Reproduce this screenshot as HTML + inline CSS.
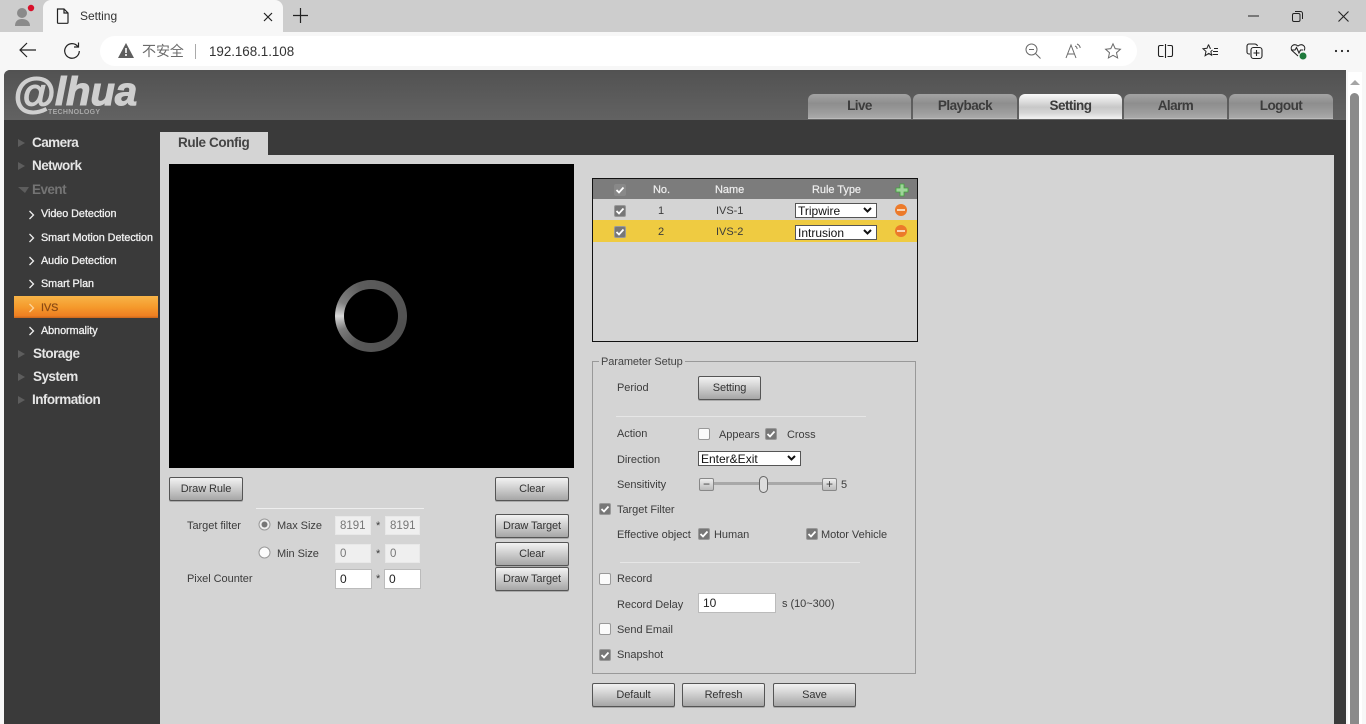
<!DOCTYPE html>
<html lang="en"><head><meta charset="utf-8"><title>Setting</title>
<style>
html,body{margin:0;padding:0;width:1366px;height:724px;overflow:hidden;background:#f7f7f7}
body{font-family:"Liberation Sans","Noto Sans CJK SC",sans-serif;font-size:11px;color:#3c3c3c;position:relative}
.a,.t,.b,.c,.i,.s{position:absolute;box-sizing:border-box}
.t{white-space:nowrap;line-height:16px;letter-spacing:-.04px}
.b{border:1px solid #555;border-radius:2px;background:linear-gradient(#f2f2f2,#d8d8d8 35%,#a6a6a6);text-align:center;color:#333;height:24px;line-height:23px;font-size:11px;box-shadow:0 1px 0 #aaa;letter-spacing:-.1px}
.c{width:12px;height:12px;background:#777;border:1px solid #999;border-radius:2px}
.c svg{position:absolute;left:0;top:0}
.c.o{background:#fbfbfb;border:1px solid #999;border-radius:2px}
.i{background:#fff;border:1px solid #bbb;font-size:12px;line-height:18px;padding-left:4px;color:#222}
.i.d{background:#efefef;border-color:#e8e8e8;color:#777;font-size:11.5px;padding-left:4px}
.s{background:#fff;border:1px solid #555;font-size:12px;color:#111;line-height:14px;padding-left:2px;height:15px;width:82px}
.s svg{position:absolute;right:4px;top:3px}
.m{color:#e6e6e6;font-weight:bold;font-size:13.5px;letter-spacing:-.55px;line-height:16px}
.n{color:#f0f0f0;font-size:10.8px;-webkit-text-stroke:.3px #f0f0f0}
.tab{position:absolute;top:94px;height:25px;border-radius:6px 6px 0 0;background:linear-gradient(#a3a3a3,#8e8e8e 40%,#9c9c9c 75%,#a9a9a9);border-bottom:1px solid #bbb;text-align:center;font-weight:bold;font-size:13.5px;line-height:23px;color:#3c3c3c;box-sizing:border-box;letter-spacing:-.55px}
.tri{position:absolute;width:0;height:0;border-left:7px solid #5d5d5d;border-top:4px solid transparent;border-bottom:4px solid transparent}
.w{color:#eee;-webkit-text-stroke:.2px #eee}
svg{overflow:visible}
</style></head><body>

<!-- browser chrome -->
<div class="a" style="left:0;top:0;width:1366px;height:32px;background:#cdcdcd"></div>
<div class="a" style="left:43px;top:0;width:240px;height:33px;background:#f7f7f7;border-radius:8px 8px 0 0"></div>
<svg class="a" style="left:12px;top:3px" width="24" height="26"><circle cx="10" cy="10" r="5" fill="#8a8a8a"/><path d="M3 23c0-5 3-7 7-7s8 2 8 7z" fill="#8a8a8a"/><circle cx="19" cy="5" r="3.2" fill="#d8102a"/></svg>
<svg class="a" style="left:56px;top:8px" width="14" height="16" fill="none" stroke="#222" stroke-width="1.2"><path d="M1.500 1h6.500l4 4v9.500a.8.8 0 0 1-.8.8H2.300a.8.8 0 0 1-.8-.8z"/><path d="M8 1v4h4"/></svg>
<div class="t" style="left:80px;top:8px;font-size:12px;color:#333">Setting</div>
<svg class="a" style="left:263px;top:12px" width="10" height="10" stroke="#222" stroke-width="1.2"><path d="M1 1l8 8M9 1l-8 8"/></svg>
<svg class="a" style="left:293px;top:8px" width="15" height="15" stroke="#222" stroke-width="1.2"><path d="M7.500 0v15M0 7.500h15"/></svg>
<svg class="a" style="left:1248px;top:15px" width="11" height="2" stroke="#222"><path d="M0 1h11"/></svg>
<svg class="a" style="left:1292px;top:11px" width="11" height="11" fill="none" stroke="#222"><rect x=".5" y="2.500" width="7.500" height="8" rx="1.500"/><path d="M3 .5h5.500a2 2 0 0 1 2 2V8"/></svg>
<svg class="a" style="left:1338px;top:11px" width="11" height="11" stroke="#222" stroke-width="1.1"><path d="M.5.5l10 10M10.500.5l-10 10"/></svg>

<div class="a" style="left:100px;top:36px;width:1037px;height:30px;background:#fff;border-radius:15px"></div>
<svg class="a" style="left:19px;top:42px" width="18" height="16" fill="none" stroke="#222" stroke-width="1.2"><path d="M1 8h16M8 1L1 8l7 7"/></svg>
<svg class="a" style="left:63px;top:42px" width="18" height="18" fill="none" stroke="#222" stroke-width="1.2"><path d="M14.800 4.500A7.300 7.300 0 1 0 16.300 9"/><path d="M15.500 0.500v4.500H11"/></svg>
<svg class="a" style="left:118px;top:43px" width="16" height="15"><path d="M8 0l8 15H0z" fill="#5e5e5e"/><path d="M7.200 5h1.600v5H7.200zM7.200 11h1.600v2H7.200z" fill="#fff"/></svg>
<div class="t" style="left:142px;top:43px;font-size:14px;color:#6b6b6b;line-height:16px">不安全</div>
<div class="a" style="left:195px;top:44px;width:1px;height:15px;background:#aaa"></div>
<div class="t" style="left:209px;top:44px;font-size:13.4px;color:#333;line-height:16px">192.168.1.108</div>

<svg class="a" style="left:1025px;top:43px" width="16" height="16" fill="none" stroke="#6a6a6a"><circle cx="6.500" cy="6.500" r="5.500"/><path d="M10.500 10.500l5 5M4 6.500h5"/></svg>
<svg class="a" style="left:1065px;top:43px" width="17" height="16" fill="none" stroke="#6a6a6a"><path d="M1 15L6 2l5 13M2.800 11h6.500M10 3c1.500.5 2 1.500 2.200 3M12 1c2 .8 3 2.200 3.200 4"/></svg>
<svg class="a" style="left:1105px;top:43px" width="16" height="16" fill="none" stroke="#6a6a6a"><path d="M8 .8l2.200 4.800 5.200.6-3.900 3.500 1.100 5.200L8 12.300l-4.600 2.600 1.100-5.200L.6 6.200l5.200-.6z"/></svg>
<svg class="a" style="left:1158px;top:44px" width="15" height="14" fill="none" stroke="#222" stroke-width="1.100"><path d="M5.500 1.500H2a1.500 1.500 0 0 0-1.500 1.500v8A1.500 1.500 0 0 0 2 12.500h3.500M9.500 1.500H13a1.500 1.500 0 0 1 1.500 1.500v8a1.500 1.500 0 0 1-1.500 1.500H9.500M7.500 0v14"/></svg>
<svg class="a" style="left:1202px;top:43px" width="17" height="17" fill="none" stroke="#222" stroke-width="1"><path d="M6.500 1.500l1.600 3.800h.9M12 5.500h4M11 8.500h5M10.500 11.500h5.500M6.500 1.500L5 5.300l-4 .4 3 2.700-.9 4.300 3.700-2.300 2.800 1.800-.7-3.800L10.500 7"/></svg>
<svg class="a" style="left:1246px;top:43px" width="17" height="16" fill="none" stroke="#222" stroke-width="1.100"><path d="M4 11H3a2 2 0 0 1-2-2V3a2 2 0 0 1 2-2h6a3 3 0 0 1 2.500 2"/><rect x="5" y="4.500" width="11" height="11" rx="2.500"/><path d="M10.500 7v6M7.500 10h6"/></svg>
<svg class="a" style="left:1290px;top:43px" width="18" height="18" fill="none" stroke="#222" stroke-width="1.100"><path d="M8 13L2 7.500C-.5 4 3.500-.5 8 3c4.500-3.500 8.500 1 6 4.500"/><path d="M1 7h4l1.500-2.500L9 10l1.500-3H13"/><circle cx="13" cy="13" r="3.500" fill="#1f7a3c" stroke="none"/></svg>
<svg class="a" style="left:1334px;top:49px" width="16" height="4" fill="#222"><circle cx="2" cy="2" r="1.100"/><circle cx="8" cy="2" r="1.100"/><circle cx="14" cy="2" r="1.100"/></svg>

<!-- page frame -->
<div class="a" style="left:4px;top:70px;width:1342px;height:654px;background:#3a3a3a;border-radius:6px 0 0 0;overflow:hidden">
  <div class="a" style="left:0;top:0;width:1342px;height:50px;background:linear-gradient(#525252,#626262)"></div>
</div>
<div class="t" style="left:13px;top:69px;font-size:40px;line-height:44px;font-weight:bold;font-style:italic;letter-spacing:0;color:#cfcfcf;-webkit-text-stroke:1.100px #cfcfcf"><span style="font-size:43px;position:relative;top:3px">@</span>lhua</div>
<div class="t" style="left:48px;top:108px;font-size:7px;line-height:9px;color:#a8a8a8;font-weight:bold;letter-spacing:.3px">TECHNOLOGY</div>

<div class="tab" style="left:808px;width:103px">Live</div>
<div class="tab" style="left:913px;width:104px">Playback</div>
<div class="tab" style="left:1019px;width:103px;background:linear-gradient(#fafafa,#c8c8c8 55%,#d6d6d6 80%,#eee);border-bottom-color:#eee">Setting</div>
<div class="tab" style="left:1124px;width:103px">Alarm</div>
<div class="tab" style="left:1229px;width:104px">Logout</div>

<!-- scrollbar -->
<div class="a" style="left:1346px;top:70px;width:20px;height:654px;background:#f7f7f7"></div>
<div class="a" style="left:1348px;top:72px;width:14px;height:652px;background:#fff"></div>
<div class="a" style="left:1350px;top:80px;width:0;height:0;border-left:5px solid transparent;border-right:5px solid transparent;border-bottom:5px solid #a5a5a5"></div>
<div class="a" style="left:1350px;top:93px;width:9px;height:631px;background:#8a8a8a;border-radius:5px 5px 0 0"></div>

<!-- sidebar -->
<div class="tri" style="left:18px;top:139px"></div><div class="t m" style="left:32px;top:135px">Camera</div>
<div class="tri" style="left:18px;top:162px"></div><div class="t m" style="left:32px;top:158px">Network</div>
<div class="a" style="left:18px;top:187px;width:0;height:0;border-top:6px solid #5d5d5d;border-left:7px solid transparent;border-right:4px solid transparent"></div><div class="t m" style="left:32px;top:182px;color:#747474;font-weight:bold">Event</div>
<div class="a" style="left:14px;top:296px;width:144px;height:22px;background:linear-gradient(#f7b448,#f59a2c 50%,#ef7f22 90%,#c8651c)"></div>
<div class="t n" style="left:41px;top:206px">Video Detection</div>
<div class="t n" style="left:41px;top:230px">Smart Motion Detection</div>
<div class="t n" style="left:41px;top:253px">Audio Detection</div>
<div class="t n" style="left:41px;top:276px">Smart Plan</div>
<div class="t n" style="left:41px;top:300px;color:#8a4a14;-webkit-text-stroke:.25px #8a4a14">IVS</div>
<div class="t n" style="left:41px;top:323px">Abnormality</div>
<svg class="a" style="left:29px;top:210px" width="7" height="130" fill="none" stroke="#eee" stroke-width="1.300"><path d="M.5 1l4 4-4 4M.5 24l4 4-4 4M.5 47l4 4-4 4M.5 70l4 4-4 4M.5 117l4 4-4 4"/><path d="M.5 94l4 4-4 4" stroke="#fbd49a"/></svg>
<div class="tri" style="left:18px;top:350px"></div><div class="t m" style="left:33px;top:346px">Storage</div>
<div class="tri" style="left:18px;top:373px"></div><div class="t m" style="left:33px;top:369px">System</div>
<div class="tri" style="left:18px;top:396px"></div><div class="t m" style="left:32px;top:392px">Information</div>

<!-- content -->
<div class="a" style="left:160px;top:132px;width:108px;height:24px;background:#d4d4d4"></div>
<div class="t" style="left:178px;top:135px;font-size:13.5px;font-weight:bold;color:#444;letter-spacing:-.4px">Rule Config</div>
<div class="a" style="left:160px;top:155px;width:1174px;height:569px;background:#d4d4d4"></div>

<div class="a" style="left:169px;top:164px;width:405px;height:304px;background:#000"></div>
<div class="a" style="left:335px;top:280px;width:72px;height:72px;border-radius:50%;background:conic-gradient(from 270deg,#d8d8d8,#808080 25deg,#5c5c5c 70deg,#505050 200deg,#585858 300deg,#7a7a7a 335deg,#d8d8d8)"></div>
<div class="a" style="left:344px;top:289px;width:54px;height:54px;border-radius:50%;background:#000"></div>

<div class="b" style="left:169px;top:477px;width:74px">Draw Rule</div>
<div class="b" style="left:495px;top:477px;width:74px">Clear</div>
<div class="a" style="left:256px;top:508px;width:168px;height:1px;background:#eee"></div>
<div class="t" style="left:187px;top:518px">Target filter</div>
<svg class="a" style="left:258px;top:518px" width="14" height="14"><circle cx="6.500" cy="6.500" r="5.500" fill="#eee" stroke="#999"/><circle cx="6.500" cy="6.500" r="3" fill="#777"/></svg>
<div class="t" style="left:277px;top:518px">Max Size</div>
<div class="i d" style="left:335px;top:516px;width:36px;height:19px">8191</div>
<div class="t" style="left:376px;top:518px">*</div>
<div class="i d" style="left:385px;top:516px;width:35px;height:19px">8191</div>
<div class="b" style="left:495px;top:514px;width:74px">Draw Target</div>
<svg class="a" style="left:258px;top:546px" width="14" height="14"><circle cx="6.500" cy="6.500" r="5.500" fill="#fbfbfb" stroke="#999"/></svg>
<div class="t" style="left:277px;top:546px">Min Size</div>
<div class="i d" style="left:335px;top:544px;width:36px;height:19px">0</div>
<div class="t" style="left:376px;top:546px">*</div>
<div class="i d" style="left:385px;top:544px;width:35px;height:19px">0</div>
<div class="b" style="left:495px;top:542px;width:74px">Clear</div>
<div class="t" style="left:187px;top:571px">Pixel Counter</div>
<div class="i" style="left:335px;top:569px;width:37px;height:20px">0</div>
<div class="t" style="left:376px;top:571px">*</div>
<div class="i" style="left:384px;top:569px;width:37px;height:20px">0</div>
<div class="b" style="left:495px;top:567px;width:74px">Draw Target</div>

<!-- rule table -->
<div class="a" style="left:592px;top:178px;width:326px;height:164px;border:1px solid #111;background:#d4d4d4"></div>
<div class="a" style="left:593px;top:179px;width:324px;height:20px;background:#7c7c7c"></div>
<div class="a" style="left:593px;top:220px;width:324px;height:22px;background:#efcb41"></div>
<div class="t w" style="left:653px;top:182px">No.</div>
<div class="t w" style="left:715px;top:182px">Name</div>
<div class="t w" style="left:812px;top:182px">Rule Type</div>
<div class="c" style="left:614px;top:184px;background:#888;border-color:#888"><svg width="10" height="10" fill="none" stroke="#fff" stroke-width="1.800"><path d="M1.500 5l2.500 2.500 4.500-5"/></svg></div>
<svg class="a" style="left:896px;top:184px" width="12" height="12"><path d="M4 0h4v4h4v4H8v4H4V8H0V4h4z" fill="#9fd49a" stroke="#3fa33a" stroke-width=".8"/></svg>
<div class="c" style="left:614px;top:205px"><svg width="10" height="10" fill="none" stroke="#fff" stroke-width="1.800"><path d="M1.500 5l2.500 2.500 4.500-5"/></svg></div>
<div class="t" style="left:658px;top:203px">1</div><div class="t" style="left:716px;top:203px">IVS-1</div>
<div class="s" style="left:795px;top:203px">Tripwire<svg width="9" height="7" fill="none" stroke="#111" stroke-width="2"><path d="M1 1l3.500 3.500L8 1"/></svg></div>
<div class="a" style="left:895px;top:204px;width:12px;height:12px;border-radius:50%;background:#ec7a2a"></div><div class="a" style="left:897px;top:209px;width:8px;height:2px;background:#f8d4b4"></div>
<div class="c" style="left:614px;top:226px"><svg width="10" height="10" fill="none" stroke="#fff" stroke-width="1.800"><path d="M1.500 5l2.500 2.500 4.500-5"/></svg></div>
<div class="t" style="left:658px;top:224px">2</div><div class="t" style="left:716px;top:224px">IVS-2</div>
<div class="s" style="left:795px;top:225px">Intrusion<svg width="9" height="7" fill="none" stroke="#111" stroke-width="2"><path d="M1 1l3.500 3.500L8 1"/></svg></div>
<div class="a" style="left:895px;top:225px;width:12px;height:12px;border-radius:50%;background:#ec7a2a"></div><div class="a" style="left:897px;top:230px;width:8px;height:2px;background:#f8d4b4"></div>

<!-- parameter setup -->
<div class="a" style="left:592px;top:361px;width:324px;height:313px;border:1px solid #999"></div>
<div class="t" style="left:599px;top:354px;background:#d4d4d4;padding:0 2px;color:#444;letter-spacing:-.1px">Parameter Setup</div>
<div class="t" style="left:617px;top:380px">Period</div>
<div class="b" style="left:698px;top:376px;width:63px">Setting</div>
<div class="a" style="left:616px;top:416px;width:250px;height:1px;background:#e6e6e6"></div>
<div class="t" style="left:617px;top:426px">Action</div>
<div class="c o" style="left:698px;top:428px"></div>
<div class="t" style="left:719px;top:427px">Appears</div>
<div class="c" style="left:765px;top:428px"><svg width="10" height="10" fill="none" stroke="#fff" stroke-width="1.800"><path d="M1.500 5l2.500 2.500 4.500-5"/></svg></div>
<div class="t" style="left:787px;top:427px">Cross</div>
<div class="t" style="left:617px;top:452px">Direction</div>
<div class="s" style="left:698px;top:451px;width:103px">Enter&amp;Exit<svg width="9" height="7" fill="none" stroke="#111" stroke-width="2"><path d="M1 1l3.500 3.500L8 1"/></svg></div>
<div class="t" style="left:617px;top:477px">Sensitivity</div>
<div class="a" style="left:699px;top:478px;width:15px;height:13px;border:1px solid #888;border-radius:2px;background:linear-gradient(#eee,#bbb);text-align:center;line-height:10px;font-size:12px">−</div>
<div class="a" style="left:714px;top:482px;width:108px;height:3px;background:#a8a8a8"></div>
<div class="a" style="left:759px;top:476px;width:9px;height:17px;border:1px solid #666;border-radius:5px;background:#ddd"></div>
<div class="a" style="left:822px;top:478px;width:15px;height:13px;border:1px solid #888;border-radius:2px;background:linear-gradient(#eee,#bbb);text-align:center;line-height:10px;font-size:12px">+</div>
<div class="t" style="left:841px;top:477px">5</div>
<div class="c" style="left:599px;top:503px"><svg width="10" height="10" fill="none" stroke="#fff" stroke-width="1.800"><path d="M1.500 5l2.500 2.500 4.500-5"/></svg></div>
<div class="t" style="left:617px;top:502px">Target Filter</div>
<div class="t" style="left:617px;top:527px">Effective object</div>
<div class="c" style="left:698px;top:528px"><svg width="10" height="10" fill="none" stroke="#fff" stroke-width="1.800"><path d="M1.500 5l2.500 2.500 4.500-5"/></svg></div>
<div class="t" style="left:714px;top:527px">Human</div>
<div class="c" style="left:806px;top:528px"><svg width="10" height="10" fill="none" stroke="#fff" stroke-width="1.800"><path d="M1.500 5l2.500 2.500 4.500-5"/></svg></div>
<div class="t" style="left:821px;top:527px">Motor Vehicle</div>
<div class="a" style="left:620px;top:562px;width:240px;height:1px;background:#e6e6e6"></div>
<div class="c o" style="left:599px;top:573px"></div>
<div class="t" style="left:617px;top:571px">Record</div>
<div class="t" style="left:617px;top:597px">Record Delay</div>
<div class="i" style="left:698px;top:593px;width:78px;height:20px;padding-left:4px">10</div>
<div class="t" style="left:782px;top:596px">s (10~300)</div>
<div class="c o" style="left:599px;top:623px"></div>
<div class="t" style="left:617px;top:622px">Send Email</div>
<div class="c" style="left:599px;top:649px"><svg width="10" height="10" fill="none" stroke="#fff" stroke-width="1.800"><path d="M1.500 5l2.500 2.500 4.500-5"/></svg></div>
<div class="t" style="left:617px;top:647px">Snapshot</div>
<div class="b" style="left:592px;top:683px;width:83px">Default</div>
<div class="b" style="left:682px;top:683px;width:83px">Refresh</div>
<div class="b" style="left:773px;top:683px;width:83px">Save</div>
</body></html>
